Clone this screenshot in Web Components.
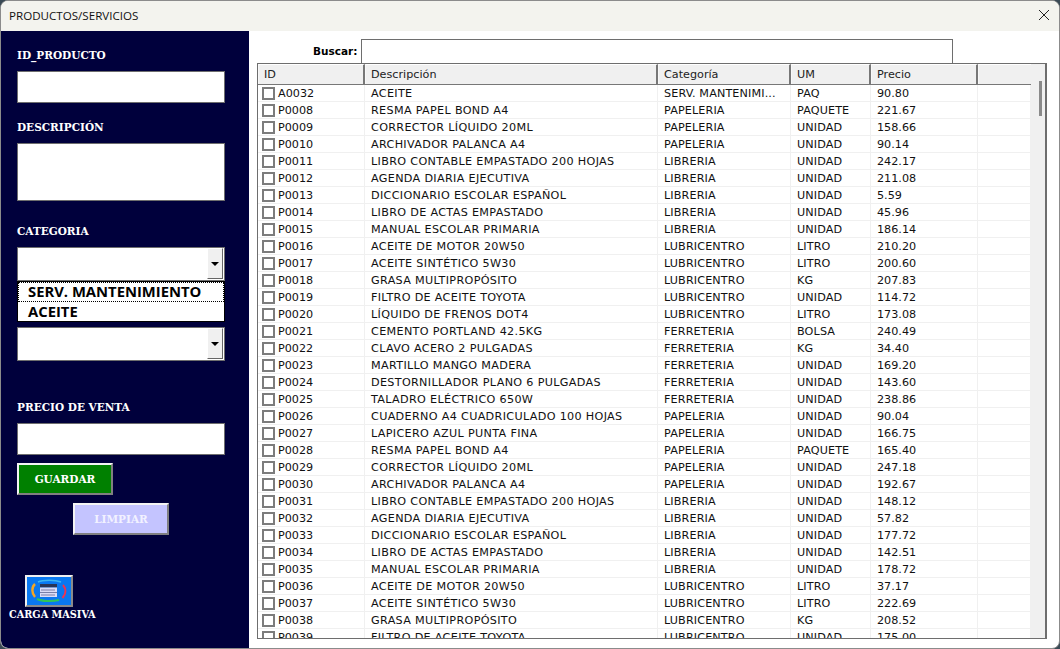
<!DOCTYPE html>
<html lang="es"><head><meta charset="utf-8"><title>PRODUCTOS/SERVICIOS</title>
<style>
html,body{margin:0;padding:0;height:100%;background:#3a4a55;overflow:hidden}
body{font-family:"DejaVu Sans",sans-serif}
</style></head><body>
<app-window>
  <side-panel slot="side"></side-panel>
  <product-table slot="main"></product-table>
</app-window>
<script>
const UI='"DejaVu Sans",sans-serif', SER='"DejaVu Serif","Liberation Serif",serif';
function def(name,html,init){
  customElements.define(name,class extends HTMLElement{
    constructor(){super();this.attachShadow({mode:'open'}).innerHTML=html;}
    connectedCallback(){init&&init.call(this,this.shadowRoot);}
  });
}
def('app-window',`<style>
:host{display:flex;flex-direction:column;width:1060px;height:649px;box-sizing:border-box;background:#fff;border-radius:8px;border:1px solid #8b8b8b;overflow:hidden;color:#000}
.title{height:30px;flex:none;box-sizing:border-box;background:#f3f3ee;display:flex;align-items:center;justify-content:space-between;padding:0 9px 2px 8px;font:11.6px "Open Sans",sans-serif;color:#111}
.main{flex:1;display:flex;min-height:0}
svg{display:block}
</style>
<div class="title"><span>PRODUCTOS/SERVICIOS</span><svg width="12" height="12" viewBox="0 0 12 12"><path d="M1 1 11 11M11 1 1 11" stroke="#222" stroke-width="1" fill="none"/></svg></div>
<div class="main"><slot name="side"></slot><slot name="main"></slot></div>`);

def('field-label',`<style>:host{display:block;font:bold 11.7px ${SER};font-stretch:condensed;color:#fff;line-height:14px;height:14px}</style><slot></slot>`);
def('text-box',`<style>:host{display:block;box-sizing:border-box;height:var(--h,32px);background:#fff;border:1px solid #6e6e6e}</style>`);
def('combo-box',`<style>
:host{display:flex;justify-content:flex-end;box-sizing:border-box;height:34px;background:#fff;border:1px solid #6e6e6e;padding:0 1px 1px 0}
.b{width:16px;box-sizing:border-box;background:#f0f0f0;border:1px solid;border-color:#fff #666 #666 #fff;display:flex;align-items:center;justify-content:center}
i{width:0;height:0;border:4px solid transparent;border-top:4px solid #000;border-bottom:0;display:block}
</style><div class="b"><i></i></div>`);
def('drop-list',`<style>
:host{display:block;box-sizing:border-box;position:absolute;left:0;right:0;top:100%;height:41px;background:#fff;border:1px solid #000;font:bold 14.8px "Open Sans",sans-serif;color:#000;z-index:2}
div{height:20px;line-height:19px;padding-left:10px;box-sizing:border-box;white-space:nowrap}
.f{outline:1px dotted #000;outline-offset:-1px}
</style><div class="f">SERV. MANTENIMIENTO</div><div>ACEITE</div>`);
def('flat-button',`<style>
:host{display:flex;align-items:center;justify-content:center;box-sizing:border-box;width:96px;height:32px;background:var(--bg);color:var(--fg,#fff);border:2px solid;border-color:#f4f4f4 #808080 #808080 #f4f4f4;font:bold 11.7px ${SER};font-stretch:condensed}
</style><slot></slot>`);
def('side-panel',`<style>
:host{display:block;width:248px;flex:none;box-sizing:border-box;background:#00003c;border-bottom-left-radius:7px;padding:17px 24px 0 16px}
.combo{position:relative}
.ic{margin:0 0 0 8px;box-sizing:border-box;width:48px;height:32px;background:#0a78f0;border:2px solid;border-color:#f0f0f0 #8a8a8a #8a8a8a #f0f0f0}
.ic svg{display:block}
.cm{margin:1px 0 0 -8px;font:bold 10.8px ${SER};font-stretch:condensed;color:#fff;line-height:13px;white-space:nowrap}
</style>
<field-label>ID_PRODUCTO</field-label>
<text-box style="margin-top:9px"></text-box>
<field-label style="margin-top:17px">DESCRIPCIÓN</field-label>
<text-box style="margin-top:9px;--h:58px"></text-box>
<field-label style="margin-top:23px">CATEGORIA</field-label>
<div class="combo" style="margin-top:9px"><combo-box></combo-box><drop-list></drop-list></div>
<combo-box style="margin-top:46px"></combo-box>
<field-label style="margin-top:39px">PRECIO DE VENTA</field-label>
<text-box style="margin-top:9px"></text-box>
<flat-button style="margin-top:8px;--bg:#008000">GUARDAR</flat-button>
<flat-button style="margin:8px 0 0 56px;--bg:#c4c4ff;--fg:#f2f2ff">LIMPIAR</flat-button>
<div class="ic" style="margin-top:40px"><svg width="44" height="28" viewBox="0 0 44 28">
<path d="M11 5C16 2.800 28 2.800 34 5" stroke="#3fb4ee" stroke-width="1.500" fill="none"/>
<path d="M8 7C4.500 10 4.500 16 8 20" stroke="#f5a623" stroke-width="2.400" fill="none"/>
<path d="M36 8C39.500 12 39 17 35.500 21" stroke="#ee3350" stroke-width="2" fill="none"/>
<path d="M10 22C15 24.500 26 24.500 32 23" stroke="#2fc45a" stroke-width="2" fill="none"/>
<rect x="13" y="7" width="17" height="3.500" fill="#2a3556"/><rect x="13" y="10.500" width="17" height="9.500" fill="#dcdcf6"/>
<path d="M14 13h14M13 15.500h17M14 18h14" stroke="#7a7fa8" stroke-width="1"/>
</svg></div>
<div class="cm">CARGA MASIVA</div>`);

const ROWS=`A0032|ACEITE|SERV. MANTENIMI...|PAQ|90.80
P0008|RESMA PAPEL BOND A4|PAPELERIA|PAQUETE|221.67
P0009|CORRECTOR LÍQUIDO 20ML|PAPELERIA|UNIDAD|158.66
P0010|ARCHIVADOR PALANCA A4|PAPELERIA|UNIDAD|90.14
P0011|LIBRO CONTABLE EMPASTADO 200 HOJAS|LIBRERIA|UNIDAD|242.17
P0012|AGENDA DIARIA EJECUTIVA|LIBRERIA|UNIDAD|211.08
P0013|DICCIONARIO ESCOLAR ESPAÑOL|LIBRERIA|UNIDAD|5.59
P0014|LIBRO DE ACTAS EMPASTADO|LIBRERIA|UNIDAD|45.96
P0015|MANUAL ESCOLAR PRIMARIA|LIBRERIA|UNIDAD|186.14
P0016|ACEITE DE MOTOR 20W50|LUBRICENTRO|LITRO|210.20
P0017|ACEITE SINTÉTICO 5W30|LUBRICENTRO|LITRO|200.60
P0018|GRASA MULTIPROPÓSITO|LUBRICENTRO|KG|207.83
P0019|FILTRO DE ACEITE TOYOTA|LUBRICENTRO|UNIDAD|114.72
P0020|LÍQUIDO DE FRENOS DOT4|LUBRICENTRO|LITRO|173.08
P0021|CEMENTO PORTLAND 42.5KG|FERRETERIA|BOLSA|240.49
P0022|CLAVO ACERO 2 PULGADAS|FERRETERIA|KG|34.40
P0023|MARTILLO MANGO MADERA|FERRETERIA|UNIDAD|169.20
P0024|DESTORNILLADOR PLANO 6 PULGADAS|FERRETERIA|UNIDAD|143.60
P0025|TALADRO ELÉCTRICO 650W|FERRETERIA|UNIDAD|238.86
P0026|CUADERNO A4 CUADRICULADO 100 HOJAS|PAPELERIA|UNIDAD|90.04
P0027|LAPICERO AZUL PUNTA FINA|PAPELERIA|UNIDAD|166.75
P0028|RESMA PAPEL BOND A4|PAPELERIA|PAQUETE|165.40
P0029|CORRECTOR LÍQUIDO 20ML|PAPELERIA|UNIDAD|247.18
P0030|ARCHIVADOR PALANCA A4|PAPELERIA|UNIDAD|192.67
P0031|LIBRO CONTABLE EMPASTADO 200 HOJAS|LIBRERIA|UNIDAD|148.12
P0032|AGENDA DIARIA EJECUTIVA|LIBRERIA|UNIDAD|57.82
P0033|DICCIONARIO ESCOLAR ESPAÑOL|LIBRERIA|UNIDAD|177.72
P0034|LIBRO DE ACTAS EMPASTADO|LIBRERIA|UNIDAD|142.51
P0035|MANUAL ESCOLAR PRIMARIA|LIBRERIA|UNIDAD|178.72
P0036|ACEITE DE MOTOR 20W50|LUBRICENTRO|LITRO|37.17
P0037|ACEITE SINTÉTICO 5W30|LUBRICENTRO|LITRO|222.69
P0038|GRASA MULTIPROPÓSITO|LUBRICENTRO|KG|208.52
P0039|FILTRO DE ACEITE TOYOTA|LUBRICENTRO|UNIDAD|175.00`.split('\n').map(r=>r.split('|'));
const COLS='107px 293px 133px 80px 107px 53px';
def('product-table',`<style>
:host{flex:1;min-width:0;box-sizing:border-box;padding:8px 12px 9px 8px;font:11.2px ${UI};color:#111;display:flex;flex-direction:column}
.search{display:flex;align-items:center;height:24px;flex:none;padding-left:56px;gap:4px}
.search b{font:bold 10.5px ${UI};color:#000;width:44px;white-space:nowrap}
.search div{width:592px;height:24px;box-sizing:border-box;border:1px solid #6e6e6e;border-bottom:0}
.grid{flex:1;min-height:0;display:flex;border:solid #6e6e6e;border-width:1px 2px 1px 1px;overflow:hidden}
.t{flex:none;width:773px;display:flex;flex-direction:column;overflow:hidden}
.r{display:grid;grid-template-columns:${COLS};height:17px;flex:none;box-sizing:border-box;border-bottom:1px solid #f0f0f0}
.r>span{padding-left:6px;height:16px;line-height:16px;white-space:nowrap;overflow:hidden;border-right:1px solid #f0f0f0;box-sizing:border-box}
.r>span em{display:block;font-style:normal;margin-top:1px}
.r>span.w em{letter-spacing:.32px}
.r>span.m em{letter-spacing:.12px}
.r>span:first-child{padding-left:4px;display:flex;gap:3px;align-items:center}
.h{height:21px;background:#f0f0f0;border-bottom:1px solid #777}
.h>span{height:20px;border:solid;border-width:1px 2px 0 1px;border-color:#fff #777 transparent #f8f8f8;padding-left:5px;line-height:19px;color:#222}
.h>span:first-child{padding-left:5px;display:block}
.h>span:last-child{border-right:0}
.c{width:9px;height:9px;border:2px solid #7c7c7c;background:#fff;flex:none;display:block}
.sb{flex:1;background:#f0f0f0}
.th{width:3px;height:35px;background:#8a8a8a;margin:17px 0 0 8px}
</style>
<div class="search"><b>Buscar:</b><div></div></div>
<div class="grid"><div class="t"><div class="r h"><span>ID</span><span>Descripción</span><span>Categoría</span><span>UM</span><span>Precio</span><span></span></div><div id="b"></div></div><div class="sb"><div class="th"></div></div></div>`,
function(s){const b=s.getElementById('b');if(b.firstChild)return;
b.innerHTML=ROWS.map(r=>`<div class="r"><span><i class="c"></i><em>${r[0]}</em></span><span class="w"><em>${r[1]}</em></span><span class="m"><em>${r[2]}</em></span><span class="m"><em>${r[3]}</em></span><span><em>${r[4]}</em></span><span></span></div>`).join('');});
</script></body></html>
